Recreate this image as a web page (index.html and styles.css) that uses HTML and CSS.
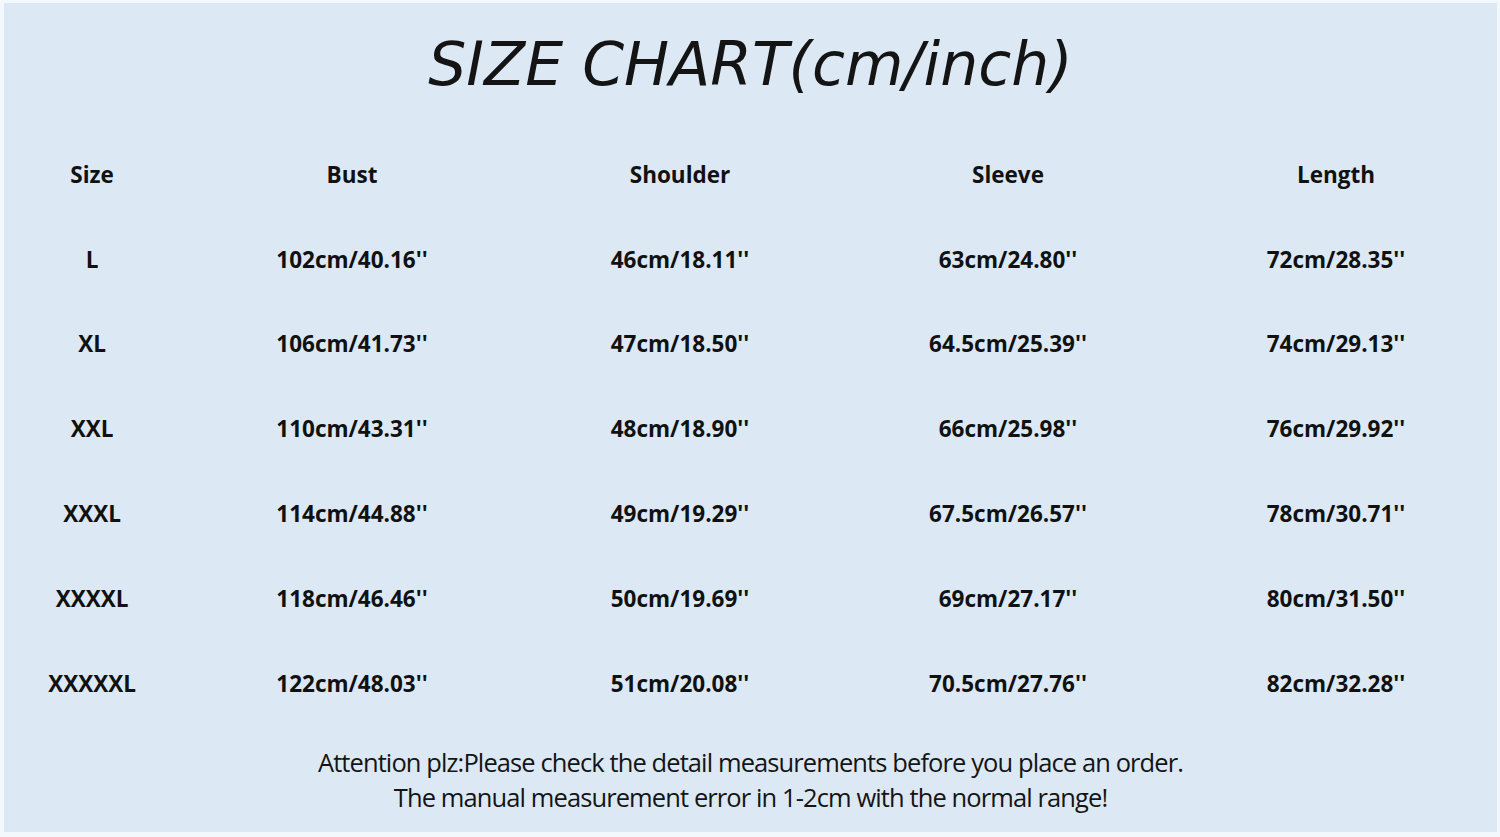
FILE: index.html
```html
<!DOCTYPE html>
<html>
<head>
<meta charset="utf-8">
<link rel="stylesheet" href="styles.css">
</head>
<body>
<div class="panel">
  <h1 class="title">SIZE CHART(cm/inch)</h1>
  <div class="chart">
    <div class="cell head">Size</div><div class="cell head">Bust</div><div class="cell head">Shoulder</div><div class="cell head">Sleeve</div><div class="cell head">Length</div>
    <div class="cell">L</div><div class="cell">102cm/40.16''</div><div class="cell">46cm/18.11''</div><div class="cell">63cm/24.80''</div><div class="cell">72cm/28.35''</div>
    <div class="cell">XL</div><div class="cell">106cm/41.73''</div><div class="cell">47cm/18.50''</div><div class="cell">64.5cm/25.39''</div><div class="cell">74cm/29.13''</div>
    <div class="cell">XXL</div><div class="cell">110cm/43.31''</div><div class="cell">48cm/18.90''</div><div class="cell">66cm/25.98''</div><div class="cell">76cm/29.92''</div>
    <div class="cell">XXXL</div><div class="cell">114cm/44.88''</div><div class="cell">49cm/19.29''</div><div class="cell">67.5cm/26.57''</div><div class="cell">78cm/30.71''</div>
    <div class="cell">XXXXL</div><div class="cell">118cm/46.46''</div><div class="cell">50cm/19.69''</div><div class="cell">69cm/27.17''</div><div class="cell">80cm/31.50''</div>
    <div class="cell">XXXXXL</div><div class="cell">122cm/48.03''</div><div class="cell">51cm/20.08''</div><div class="cell">70.5cm/27.76''</div><div class="cell">82cm/32.28''</div>
  </div>
  <div class="note">
    <p>Attention plz:Please check the detail measurements before you place an order.</p>
    <p>The manual measurement error in 1-2cm with the normal range!</p>
  </div>
</div>
</body>
</html>
```
FILE: styles.css
```css
html, body {
  margin: 0;
  padding: 0;
}
body {
  width: 1500px;
  height: 837px;
  background: #f3f8fc;
  overflow: hidden;
}
.panel {
  margin: 3px 3px 0 4px;
  height: 829px;
  background: #dce9f4;
  color: #111;
  display: flex;
  flex-direction: column;
}
.title {
  margin: 0;
  height: 128px;
  display: flex;
  align-items: center;
  justify-content: center;
  padding-bottom: 6px;
  box-sizing: border-box;
  font-family: "DejaVu Sans", sans-serif;
  font-style: italic;
  font-weight: normal;
  font-size: 60px;
  letter-spacing: 0px;
  color: #141414;
  padding-left: 0;
}
.chart {
  display: grid;
  grid-template-columns: 176px 344px 312px 344px 312px;
  grid-auto-rows: 84.8px;
  padding-top: 1px;
  font-family: "Open Sans", sans-serif;
  font-weight: 700;
  font-size: 22.5px;
  letter-spacing: 0;
}
.cell {
  display: flex;
  align-items: center;
  justify-content: center;
}
.note {
  margin-top: 19px;
  font-family: "Open Sans", sans-serif;
  font-size: 25.5px;
  letter-spacing: -0.9px;
  text-align: center;
  color: #151515;
}
.note p {
  margin: 0;
  line-height: 35px;
}
```
